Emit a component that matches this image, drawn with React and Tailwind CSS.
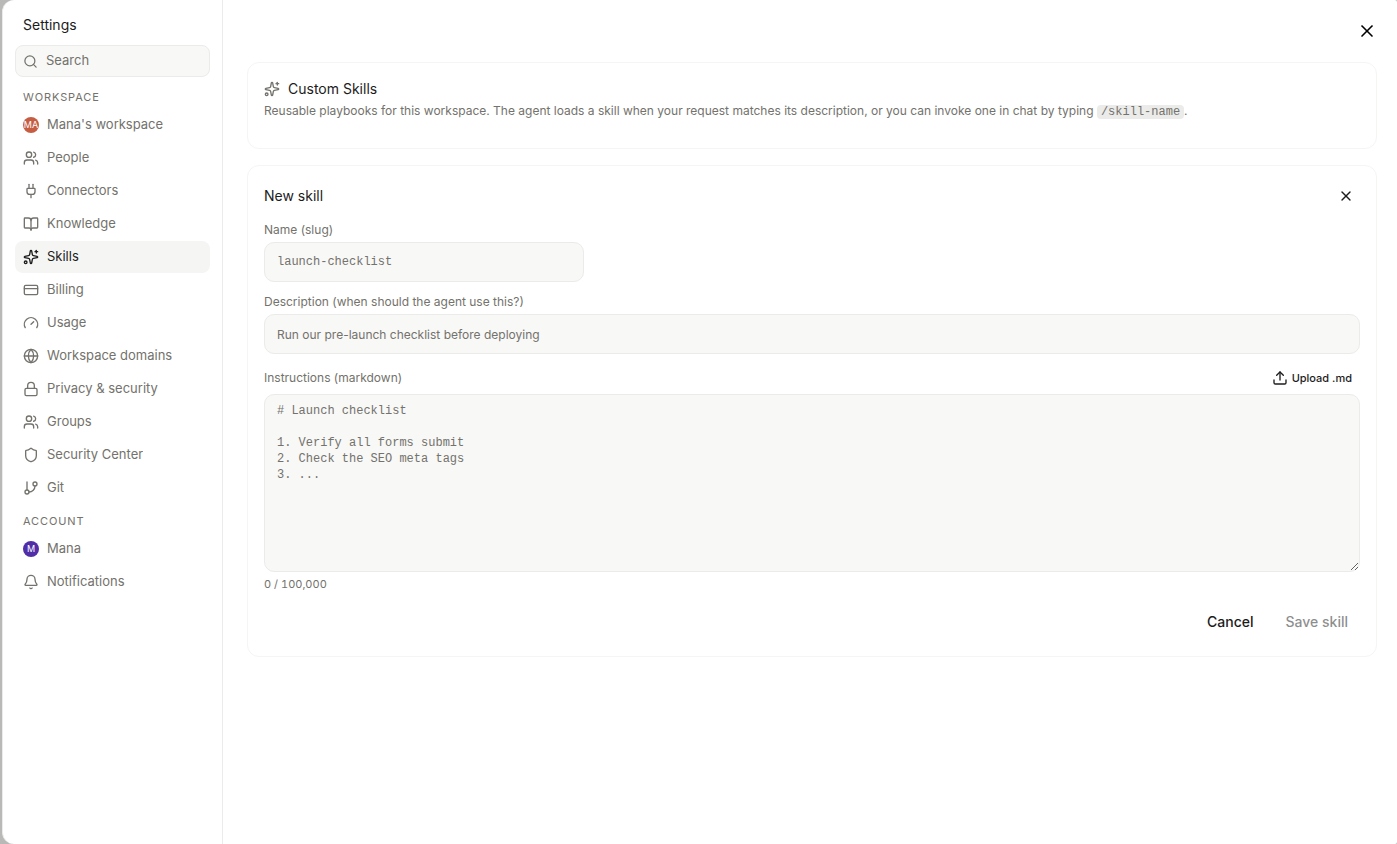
import { useState } from 'react';
import {
  Bell, BookOpen, CreditCard, Gauge, GitBranch, Globe, Lock,
  Plug, Search, Shield, Sparkles, Upload, Users, X,
} from 'lucide-react';

const MAX_CHARS = 100000;

const PLACEHOLDER = `# Launch checklist

1. Verify all forms submit
2. Check the SEO meta tags
3. ...`;

const WORKSPACE_ITEMS = [
  { label: "Mana's workspace", avatar: 'MA', avatarClass: 'bg-[#c65d43]' },
  { label: 'People', icon: Users },
  { label: 'Connectors', icon: Plug },
  { label: 'Knowledge', icon: BookOpen },
  { label: 'Skills', icon: Sparkles },
  { label: 'Billing', icon: CreditCard },
  { label: 'Usage', icon: Gauge },
  { label: 'Workspace domains', icon: Globe },
  { label: 'Privacy & security', icon: Lock },
  { label: 'Groups', icon: Users },
  { label: 'Security Center', icon: Shield },
  { label: 'Git', icon: GitBranch },
];

const ACCOUNT_ITEMS = [
  { label: 'Mana', avatar: 'M', avatarClass: 'bg-[#512da8]' },
  { label: 'Notifications', icon: Bell },
];

function NavItem({ item, active, onSelect }) {
  const Icon = item.icon;
  return (
    <button
      type="button"
      onClick={() => onSelect(item.label)}
      aria-current={active ? 'page' : undefined}
      className={`flex h-8 w-full items-center gap-2 rounded-lg px-2 text-left text-[13px] ${
        active ? 'bg-[#f5f5f4] text-[#1c1c1c]' : 'text-[#73726c]'
      }`}
    >
      {Icon ? (
        <Icon size={16} className="shrink-0" />
      ) : (
        <span className={`flex size-4 shrink-0 items-center justify-center rounded-full text-[9px] text-white ${item.avatarClass}`}>
          {item.avatar}
        </span>
      )}
      <span className="truncate">{item.label}</span>
    </button>
  );
}

function NavSection({ title, items, current, onSelect }) {
  return (
    <section>
      <h2 className="px-2 pt-2 pb-1 text-[11px] leading-4 tracking-[0.88px] text-[#73726c] uppercase">{title}</h2>
      <div className="flex flex-col gap-px">
        {items.map((item) => (
          <NavItem key={item.label} item={item} active={item.label === current} onSelect={onSelect} />
        ))}
      </div>
    </section>
  );
}

function Sidebar() {
  const [current, setCurrent] = useState('Skills');
  return (
    <aside className="w-55 shrink-0 border-r border-[#ebebe9] px-3 pt-[13px]">
      <h1 className="px-2 text-sm leading-6 text-[#1c1c1c]">Settings</h1>
      <label className="mt-2 flex h-8 items-center gap-2 rounded-lg border border-[#ebebe9] bg-[#f8f8f7] px-[7px] text-[#73726c]">
        <Search size={15} className="shrink-0" />
        <input
          type="search"
          aria-label="Search settings"
          placeholder="Search"
          className="w-full min-w-0 bg-transparent text-[13px] outline-none placeholder:text-[#73726c]"
        />
      </label>
      <nav className="mt-1 flex flex-col gap-px">
        <NavSection title="Workspace" items={WORKSPACE_ITEMS} current={current} onSelect={setCurrent} />
        <NavSection title="Account" items={ACCOUNT_ITEMS} current={current} onSelect={setCurrent} />
      </nav>
    </aside>
  );
}

const fieldClass =
  'block rounded-[10px] border border-[#ebebe9] bg-[#f8f8f7] px-3 text-xs text-[#1c1c1c] outline-none placeholder:text-[#73726c]';

function NewSkillForm() {
  const [name, setName] = useState('');
  const [description, setDescription] = useState('');
  const [instructions, setInstructions] = useState('');
  const canSave = name && description && instructions;

  return (
    <form className="rounded-xl border border-[#f5f5f4] p-4" onSubmit={(e) => e.preventDefault()}>
      <div className="flex h-7 items-center justify-between pr-1.5">
        <h2 className="text-sm text-[#1c1c1c]">New skill</h2>
        <button type="button" aria-label="Close form" className="text-[#1c1c1c]">
          <X size={16} />
        </button>
      </div>

      <div className="mt-3">
        <label htmlFor="skill-name" className="block text-xs leading-4 text-[#73726c]">Name (slug)</label>
        <input
          id="skill-name"
          value={name}
          onChange={(e) => setName(e.target.value)}
          placeholder="launch-checklist"
          className={`${fieldClass} mt-1 h-10 w-full max-w-80 font-['Liberation_Mono',monospace]`}
        />
      </div>

      <div className="mt-3">
        <label htmlFor="skill-description" className="block text-xs leading-4 text-[#73726c]">
          Description (when should the agent use this?)
        </label>
        <input
          id="skill-description"
          value={description}
          onChange={(e) => setDescription(e.target.value)}
          placeholder="Run our pre-launch checklist before deploying"
          className={`${fieldClass} mt-1 h-10 w-full`}
        />
      </div>

      <div className="mt-3">
        <div className="flex h-6 items-center justify-between">
          <label htmlFor="skill-instructions" className="text-xs leading-4 text-[#73726c]">Instructions (markdown)</label>
          <button type="button" className="flex items-center gap-1 px-2 text-[11px] font-medium text-[#1c1c1c]">
            <Upload size={16} />
            Upload .md
          </button>
        </div>
        <textarea
          id="skill-instructions"
          rows={10}
          maxLength={MAX_CHARS}
          value={instructions}
          onChange={(e) => setInstructions(e.target.value)}
          placeholder={PLACEHOLDER}
          className={`${fieldClass} mt-1 w-full resize-y py-2 font-['Liberation_Mono',monospace] leading-4`}
        />
        <p className="mt-1 text-[11px] leading-4 text-[#73726c] tabular-nums">
          {instructions.length} / {MAX_CHARS.toLocaleString('en-US')}
        </p>
      </div>

      <div className="mt-3 flex justify-end gap-2 text-sm font-medium">
        <button type="button" className="h-9 px-3 text-[#1c1c1c]">Cancel</button>
        <button type="submit" disabled={!canSave} className="h-9 px-3 text-[#1c1c1c] disabled:opacity-50">Save skill</button>
      </div>
    </form>
  );
}

export default function App() {
  return (
    <div className="min-h-screen bg-[#b9b9b8] pl-[2px] font-['Inter',sans-serif] antialiased">
      <div className="flex min-h-screen rounded-l-xl rounded-r-xs border-l border-[#ebebe9] bg-white">
        <Sidebar />
        <main className="min-w-0 flex-1 pr-5 pb-6 pl-6">
          <div className="flex h-[62px] items-center justify-end">
            <button type="button" aria-label="Close settings" className="text-black">
              <X size={20} />
            </button>
          </div>

          <section className="rounded-xl border border-[#f5f5f4] px-4 pt-4 pb-7">
            <div className="flex items-center gap-2">
              <Sparkles size={16} className="text-[#73726c]" />
              <h2 className="text-sm text-[#1c1c1c]">Custom Skills</h2>
            </div>
            <p className="mt-1 text-xs text-[#73726c]">
              Reusable playbooks for this workspace. The agent loads a skill when your request matches its description, or
              you can invoke one in chat by typing{' '}
              <code className="rounded-sm bg-[#ebebe9] px-1 font-['Liberation_Mono',monospace]">/skill-name</code>.
            </p>
          </section>

          <div className="mt-4">
            <NewSkillForm />
          </div>
        </main>
      </div>
    </div>
  );
}
